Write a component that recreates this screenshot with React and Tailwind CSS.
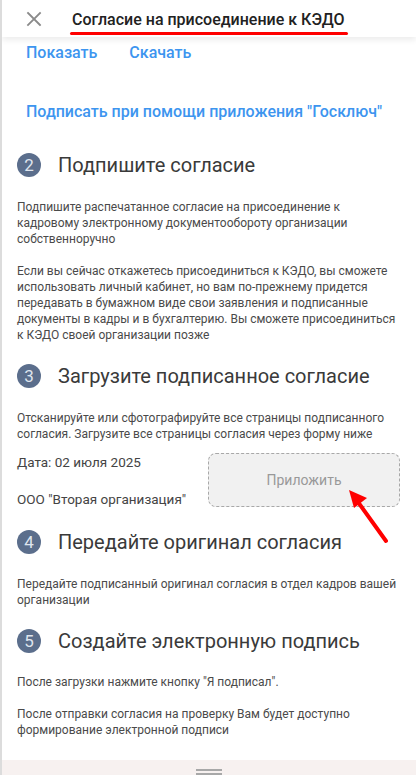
import React from "react";

function Step({ n, title, top }) {
  return (
    <div className={`flex items-center ${top}`}>
      <div className="w-[24px] h-[24px] rounded-full bg-[#5b6e8c] text-[#dfe5ee] flex items-center justify-center text-[17px] leading-none">
        {n}
      </div>
      <div className="ml-[17px] text-[20px] leading-[26px] text-[#3a3a3a]">{title}</div>
    </div>
  );
}

export default function App() {
  return (
    <div
      className="relative w-[416px] h-[775px] overflow-hidden bg-white border-l-2 border-[#dcdcdc]"
      style={{ fontFamily: "Roboto, 'Noto Sans', sans-serif" }}
    >
      <div className="relative z-10 h-[37px] flex items-center bg-white shadow-[0_3px_6px_rgba(0,0,0,0.08)]">
        <svg className="ml-[24px]" width="16" height="16" viewBox="0 0 16 16">
          <path d="M2 2 L14 14 M14 2 L2 14" stroke="#8a8a8a" strokeWidth="1.8" strokeLinecap="square" />
        </svg>
        <div className="relative ml-[30px]">
          <div className="text-[16px] font-medium text-[#222] leading-[20px] mt-[2px]">Согласие на присоединение к КЭДО</div>
          <div className="absolute left-[-2px] right-[-3px] top-[24px] h-[3px] rounded-full bg-[#ff0000]" />
        </div>
      </div>

      <div className="pl-[15px] pr-[17px] text-[#444]">
        <div className="flex gap-[32px] ml-[9px] mt-[6px] text-[16px] font-medium text-[#3d95ef] leading-[20px]">
          <span>Показать</span>
          <span>Скачать</span>
        </div>
        <div className="ml-[9px] mt-[39px] text-[16px] font-medium text-[#3d95ef] leading-[20px] whitespace-nowrap">
          Подписать при помощи приложения "Госключ"
        </div>

        <Step n="2" title="Подпишите согласие" top="mt-[30px]" />
        <div className="mt-[21px] text-[12px] leading-[16px] text-[#4a4a4a]">
          <p>Подпишите распечатанное согласие на присоединение к кадровому электронному документообороту организации собственноручно</p>
          <p className="mt-[16px]">
            Если вы сейчас откажетесь присоединиться к КЭДО, вы сможете использовать личный кабинет, но вам по-прежнему придется передавать в бумажном виде свои заявления и подписанные документы в кадры и в бухгалтерию. Вы сможете присоединиться к КЭДО своей организации позже
          </p>
        </div>

        <Step n="3" title="Загрузите подписанное согласие" top="mt-[20px]" />
        <div className="mt-[21px] text-[12px] leading-[16px] text-[#4a4a4a]">
          Отсканируйте или сфотографируйте все страницы подписанного согласия. Загрузите все страницы согласия через форму ниже
        </div>
        <div className="flex justify-between mt-[11px] mr-[-1px]">
          <div className="text-[13.5px] leading-[18px] text-[#444]">
            <div>Дата: 02 июля 2025</div>
            <div className="mt-[19px]">ООО "Вторая организация"</div>
          </div>
          <div className="w-[192px] h-[54px] rounded-[8px] border border-dashed border-[#a8a8a8] bg-[#f1f1f1] flex items-center justify-center text-[14px] text-[#999]">
            Приложить
          </div>
        </div>

        <Step n="4" title="Передайте оригинал согласия" top="mt-[21px]" />
        <div className="mt-[21px] text-[12px] leading-[16px] text-[#4a4a4a]">
          Передайте подписанный оригинал согласия в отдел кадров вашей организации
        </div>

        <Step n="5" title="Создайте электронную подпись" top="mt-[20px]" />
        <div className="mt-[20px] text-[12px] leading-[16px] text-[#4a4a4a]">
          <p>После загрузки нажмите кнопку "Я подписал".</p>
          <p className="mt-[16px]">После отправки согласия на проверку Вам будет доступно формирование электронной подписи</p>
        </div>
      </div>

      <svg className="absolute left-[340px] top-[485px]" width="50" height="60" viewBox="0 0 50 60">
        <path d="M44 56 L16 17" stroke="#ff0000" strokeWidth="4" strokeLinecap="round" />
        <path d="M7 5 L25 13 L12 23 Z" fill="#ff0000" />
      </svg>

      <div className="absolute left-0 right-0 bottom-0 h-[15px] bg-[#f7f1f0] flex flex-col items-center pt-[9px] gap-[2px]">
        <div className="w-[26px] h-[2px] bg-[#a8a8a8]" />
        <div className="w-[26px] h-[2px] bg-[#a8a8a8]" />
      </div>
    </div>
  );
}
